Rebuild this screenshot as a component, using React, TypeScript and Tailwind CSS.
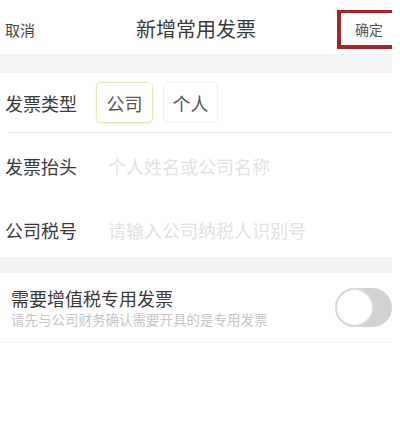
import React from "react";

export default function App() {
  const font = { fontFamily: '"Noto Sans CJK SC", "Noto Sans", sans-serif' };
  return (
    <div className="w-[400px] h-[425px] bg-white overflow-hidden" style={font}>
      <div className="w-[392px]">
        {/* Header */}
        <div className="relative h-[54px] pt-[4px] flex items-center">
          <span className="ml-[5px] text-[15px] text-[#444] leading-none">取消</span>
          <span className="absolute left-0 right-0 top-[4px] bottom-0 flex items-center justify-center text-[20px] text-[#3a3a3a] leading-none pointer-events-none">
            新增常用发票
          </span>
          <div className="ml-auto mt-[1px] h-[39px] w-[55px] border-l-[4px] border-t-[3px] border-b-[4px] border-[#a3262a] flex items-center pl-[14px]">
            <span className="text-[14px] text-[#555] leading-none">确定</span>
          </div>
        </div>
        {/* band */}
        <div className="h-[19px] bg-[#f4f4f4]" />
        {/* row 1 */}
        <div className="h-[59px] flex items-center">
          <span className="ml-[5px] text-[18px] text-[#3a3a3a] leading-none w-[91px]">发票类型</span>
          <div className="h-[41px] w-[57px] rounded-[5px] border border-[#e4e8b4] shadow-[0_1px_2px_rgba(200,200,150,0.35)] flex items-center justify-center text-[18px] text-[#555] leading-none">
            公司
          </div>
          <div className="ml-[10px] h-[41px] w-[55px] rounded-[5px] border border-[#efefef] flex items-center justify-center text-[18px] text-[#555] leading-none">
            个人
          </div>
        </div>
        <div className="ml-[8px] h-px bg-[#ececec]" />
        {/* row 2 */}
        <div className="h-[66px] flex items-center">
          <span className="ml-[5px] text-[18px] text-[#3a3a3a] leading-none w-[103px]">发票抬头</span>
          <span className="text-[18px] text-[#e2e2e2] leading-none">个人姓名或公司名称</span>
        </div>
        {/* row 3 */}
        <div className="h-[58px] pt-[4px] flex items-center">
          <span className="ml-[5px] text-[18px] text-[#3a3a3a] leading-none w-[103px]">公司税号</span>
          <span className="text-[18px] text-[#e2e2e2] leading-none">请输入公司纳税人识别号</span>
        </div>
        {/* band */}
        <div className="h-[16px] bg-[#f3f3f3]" />
        {/* row 4 */}
        <div className="h-[69px] flex items-center">
          <div className="ml-[11px] flex flex-col">
            <span className="text-[18px] text-[#3a3a3a] leading-[22px]">需要增值税专用发票</span>
            <span className="mt-[2px] text-[13.5px] text-[#c6c6c6] leading-[17px]">请先与公司财务确认需要开具的是专用发票</span>
          </div>
          <div className="ml-auto relative h-[39px] w-[57px] rounded-full bg-[#d2d2d2]">
            <div className="absolute left-0 top-0 h-[39px] w-[39px] rounded-full bg-white border-[2px] border-[#dadada]" />
          </div>
        </div>
        <div className="h-px bg-[#f0f0f0]" />
      </div>
    </div>
  );
}
